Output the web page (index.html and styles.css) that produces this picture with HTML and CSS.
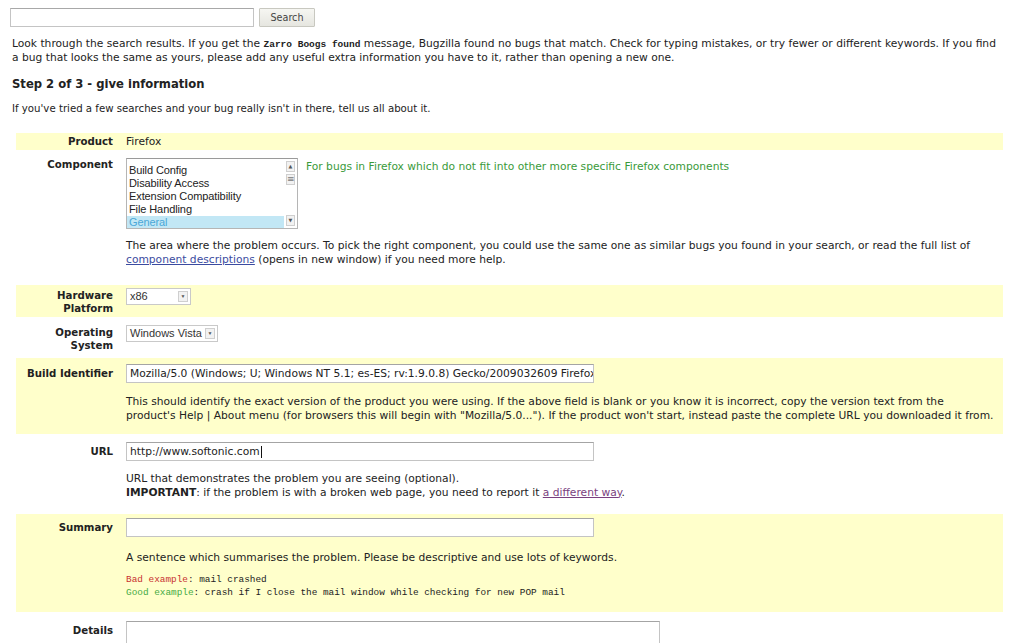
FILE: index.html
```html
<!DOCTYPE html>
<html>
<head>
<meta charset="utf-8">
<title>Enter Bug</title>
<link rel="stylesheet" href="styles.css">
</head>
<body>
<div class="page">
  <form class="searchbar">
    <input class="search-input" type="text">
    <button class="search-btn" type="button">Search</button>
  </form>

  <p class="intro">Look through the search results. If you get the <tt class="zarro">Zarro Boogs found</tt> message, Bugzilla found no bugs that match. Check for typing mistakes, or try fewer or different keywords. If you find a bug that looks the same as yours, please add any useful extra information you have to it, rather than opening a new one.</p>

  <h3 class="step">Step 2 of 3 - give information</h3>

  <p class="lead">If you've tried a few searches and your bug really isn't in there, tell us all about it.</p>

  <div class="form">
    <div class="row hl row-product">
      <div class="label">Product</div>
      <div class="value">Firefox</div>
    </div>

    <div class="row row-component">
      <div class="label">Component</div>
      <div class="value">
        <div class="comp-line">
          <div class="listbox">
            <div class="options">
              <div class="opt">Build Config</div>
              <div class="opt">Disability Access</div>
              <div class="opt">Extension Compatibility</div>
              <div class="opt">File Handling</div>
              <div class="opt sel">General</div>
            </div>
            <div class="vscroll">
              <span class="sbtn">&#9650;</span>
              <span class="sbtn thumb">&#8801;</span>
              <span class="sfill"></span>
              <span class="sbtn">&#9660;</span>
            </div>
          </div>
          <div class="comp-desc">For bugs in Firefox which do not fit into other more specific Firefox components</div>
        </div>
        <p class="help">The area where the problem occurs. To pick the right component, you could use the same one as similar bugs you found in your search, or read the full list of <a class="link" href="#">component descriptions</a> (opens in new window) if you need more help.</p>
      </div>
    </div>

    <div class="row hl row-hw">
      <div class="label">Hardware<br>Platform</div>
      <div class="value">
        <div class="select sel-hw"><span class="sel-text">x86</span><span class="sel-arrow">&#9660;</span></div>
      </div>
    </div>

    <div class="row row-os">
      <div class="label">Operating<br>System</div>
      <div class="value">
        <div class="select sel-os"><span class="sel-text">Windows Vista</span><span class="sel-arrow">&#9660;</span></div>
      </div>
    </div>

    <div class="row hl row-build">
      <div class="label">Build Identifier</div>
      <div class="value">
        <div class="textbox"><span class="tb-text">Mozilla/5.0 (Windows; U; Windows NT 5.1; es-ES; rv:1.9.0.8) Gecko/2009032609 Firefox/3.0.8</span></div>
        <p class="help">This should identify the exact version of the product you were using. If the above field is blank or you know it is incorrect, copy the version text from the<br>product's Help | About menu (for browsers this will begin with "Mozilla/5.0..."). If the product won't start, instead paste the complete URL you downloaded it from.</p>
      </div>
    </div>

    <div class="row row-url">
      <div class="label">URL</div>
      <div class="value">
        <div class="textbox"><span class="tb-text">http://www.softonic.com</span><span class="caret"></span></div>
        <p class="help">URL that demonstrates the problem you are seeing (optional).<br><b>IMPORTANT</b>: if the problem is with a broken web page, you need to report it <a class="link visited" href="#">a different way</a>.</p>
      </div>
    </div>

    <div class="row hl row-summary">
      <div class="label">Summary</div>
      <div class="value">
        <div class="textbox"></div>
        <p class="help">A sentence which summarises the problem. Please be descriptive and use lots of keywords.</p>
        <p class="examples"><span class="bad">Bad example</span>: mail crashed<br><span class="good">Good example</span>: crash if I close the mail window while checking for new POP mail</p>
      </div>
    </div>

    <div class="row row-details">
      <div class="label">Details</div>
      <div class="value">
        <div class="textarea"></div>
      </div>
    </div>
  </div>
</div>
</body>
</html>
```

FILE: styles.css
```css
html, body {
  margin: 0;
  padding: 0;
  background: #ffffff;
}

body {
  font-family: "DejaVu Sans", Verdana, sans-serif;
  font-size: 10.7px;
  color: #222222;
  overflow: hidden;
}

.page {
  padding: 8px 0 0 12px;
}

.searchbar {
  display: flex;
  align-items: center;
  gap: 5px;
  margin: 0 0 0 -2px;
  height: 19px;
}

.search-input {
  width: 244px;
  height: 19px;
  box-sizing: border-box;
  border: 1px solid #c4c4c4;
  border-top-color: #a8a8a8;
  margin: 0;
  padding: 0;
  background: #fff;
}

.search-btn {
  width: 56px;
  height: 19px;
  box-sizing: border-box;
  margin: 0;
  padding: 0;
  border: 1px solid #c8c8c0;
  border-radius: 1px;
  background: linear-gradient(#f6f6f2, #e6e6e0);
  font-family: "DejaVu Sans", Verdana, sans-serif;
  font-size: 9.6px;
  color: #444;
}

.intro {
  margin: 10px 0 0 0;
  line-height: 13px;
  width: 988px;
}

.zarro {
  font-family: "Liberation Mono", "Courier New", monospace;
  font-weight: bold;
  font-size: 9.5px;
  color: #222;
}

.step {
  margin: 12px 0 0 0;
  font-size: 11.6px;
  font-weight: bold;
  line-height: 16px;
  color: #222;
}

.lead {
  margin: 10px 0 0 0;
  font-size: 10.2px;
  line-height: 13px;
}

.form {
  margin: 18px 0 0 4px;
  width: 987px;
  display: flex;
  flex-direction: column;
  gap: 3px;
}

.row {
  display: grid;
  grid-template-columns: 104px 1fr;
}

.row.hl {
  background: #ffffcb;
}

.label {
  text-align: right;
  font-weight: bold;
  font-size: 10.2px;
  padding-right: 7px;
  line-height: 13px;
  color: #222;
}

.value {
  padding-left: 6px;
  line-height: 13px;
}

/* Product */
.row-product .label,
.row-product .value {
  padding-top: 2px;
  padding-bottom: 2px;
}

/* Component */
.row-component {
  padding-top: 5px;
  padding-bottom: 16px;
}

.comp-line {
  display: flex;
  align-items: flex-start;
  gap: 8px;
}

.listbox {
  width: 172px;
  height: 71px;
  box-sizing: border-box;
  border: 1px solid #b5b5b5;
  border-top-color: #9a9a9a;
  display: flex;
  background: #fff;
  overflow: hidden;
}

.options {
  flex: 1;
  padding-top: 5px;
  font-family: "Liberation Sans", Arial, sans-serif;
  font-size: 11px;
  color: #222;
}

.opt {
  height: 13px;
  line-height: 13px;
  padding-left: 2px;
  white-space: nowrap;
  letter-spacing: -0.1px;
}

.opt.sel {
  background: #c2e7f5;
  color: #4aa8d8;
}

.vscroll {
  width: 13px;
  display: flex;
  flex-direction: column;
  align-items: center;
  padding: 2px 0 0 0;
  background: #fff;
}

.sbtn {
  width: 9px;
  height: 11px;
  box-sizing: border-box;
  border: 1px solid #cfcfcf;
  background: #f2f2f2;
  color: #555;
  font-size: 5px;
  line-height: 9px;
  text-align: center;
  margin-bottom: 2px;
}

.sbtn.thumb {
  font-size: 9px;
  line-height: 8px;
  color: #777;
}

.sfill {
  flex: 1;
}

.comp-desc {
  color: #3a9a3a;
  padding-top: 2px;
  line-height: 13px;
}

.help {
  margin: 0;
  line-height: 13.5px;
}

.row-component .help {
  margin-top: 10px;
  padding-right: 10px;
}

.link {
  color: #3b4ba0;
  text-decoration: underline;
}

.link.visited {
  color: #7a3f80;
}

/* Selects */
.select {
  display: flex;
  align-items: center;
  height: 17px;
  box-sizing: border-box;
  border: 1px solid #c9c9c9;
  background: #fff;
  font-family: "Liberation Sans", Arial, sans-serif;
  font-size: 11px;
  color: #333;
  padding-left: 3px;
}

.sel-text {
  flex: 1;
  white-space: nowrap;
}

.sel-arrow {
  width: 10px;
  height: 11px;
  box-sizing: border-box;
  border: 1px solid #cfcfcf;
  background: #f2f2f2;
  color: #555;
  font-size: 5px;
  line-height: 9px;
  text-align: center;
  margin-right: 2px;
}

.sel-hw {
  width: 65px;
}

.sel-os {
  width: 92px;
}

.row-hw {
  padding-top: 3px;
  padding-bottom: 2px;
}

.row-hw .label {
  padding-top: 1px;
}

.row-os .label {
  padding-top: 4px;
}

.row-os {
  padding-top: 2px;
  padding-bottom: 3px;
}

.row-os .select {
  margin-top: 3px;
}

/* Text boxes */
.textbox {
  width: 468px;
  height: 19px;
  box-sizing: border-box;
  border: 1px solid #c4c4c4;
  border-top-color: #a4a4a4;
  background: #fff;
  display: flex;
  align-items: center;
  overflow: hidden;
  padding-left: 3px;
  white-space: nowrap;
}

.tb-text {
  color: #222;
}

.caret {
  display: inline-block;
  width: 1px;
  height: 12px;
  background: #111;
  margin-left: 1px;
}

.row-build {
  padding-top: 6px;
  padding-bottom: 12px;
}

.row-build .label {
  padding-top: 3px;
}

.row-build .help {
  margin-top: 12px;
  white-space: nowrap;
}

.row-url {
  padding-top: 5px;
  padding-bottom: 12px;
}

.row-url .label {
  padding-top: 3px;
}

.row-url .help {
  margin-top: 11px;
}

.row-summary {
  padding-top: 4px;
  padding-bottom: 13px;
}

.row-summary .label {
  padding-top: 3px;
}

.row-summary .help {
  margin-top: 14px;
}

.examples {
  margin: 8px 0 0 0;
  font-family: "Liberation Mono", "Courier New", monospace;
  font-size: 9.4px;
  line-height: 13px;
  color: #222;
}

.bad {
  color: #c83030;
}

.good {
  color: #44aa44;
}

.row-details {
  padding-top: 6px;
}

.row-details .label {
  padding-top: 3px;
}

.textarea {
  width: 534px;
  height: 60px;
  box-sizing: border-box;
  border: 1px solid #c4c4c4;
  border-top-color: #a4a4a4;
  background: #fff;
}
```
